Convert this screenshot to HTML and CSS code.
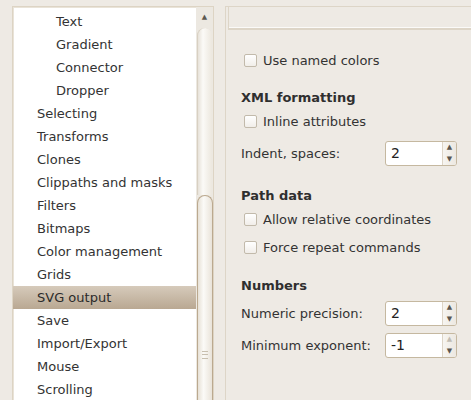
FILE: index.html
```
<!DOCTYPE html>
<html>
<head>
<meta charset="utf-8">
<link rel="stylesheet" href="styles.css">
</head>
<body>
<div class="window">
  <div class="tree">
    <ul class="list">
      <li class="sub">Text</li>
      <li class="sub">Gradient</li>
      <li class="sub">Connector</li>
      <li class="sub">Dropper</li>
      <li>Selecting</li>
      <li>Transforms</li>
      <li>Clones</li>
      <li>Clippaths and masks</li>
      <li>Filters</li>
      <li>Bitmaps</li>
      <li>Color management</li>
      <li>Grids</li>
      <li class="selected">SVG output</li>
      <li>Save</li>
      <li>Import/Export</li>
      <li>Mouse</li>
      <li>Scrolling</li>
    </ul>
    <div class="scrollbar">
      <div class="arrow">&#9650;</div>
      <div class="trough"></div>
      <div class="thumb"><span class="grip"></span></div>
    </div>
  </div>
  <div class="pane">
    <div class="pane-header"></div>
    <div class="pane-body">
      <label class="check-row r1"><span class="box"></span>Use named colors</label>
      <div class="heading h1">XML formatting</div>
      <label class="check-row"><span class="box"></span>Inline attributes</label>
      <div class="spin-row s1"><span class="spin-label">Indent, spaces:</span>
        <div class="spin"><span class="value">2</span><span class="arrows"><span class="up">&#9650;</span><span class="down">&#9660;</span></span></div>
      </div>
      <div class="heading h2">Path data</div>
      <label class="check-row"><span class="box"></span>Allow relative coordinates</label>
      <label class="check-row r2"><span class="box"></span>Force repeat commands</label>
      <div class="heading h3">Numbers</div>
      <div class="spin-row s2"><span class="spin-label">Numeric precision:</span>
        <div class="spin"><span class="value">2</span><span class="arrows"><span class="up">&#9650;</span><span class="down">&#9660;</span></span></div>
      </div>
      <div class="spin-row s3"><span class="spin-label">Minimum exponent:</span>
        <div class="spin"><span class="value">-1</span><span class="arrows"><span class="up disabled">&#9650;</span><span class="down">&#9660;</span></span></div>
      </div>
    </div>
  </div>
</div>
</body>
</html>
```
FILE: styles.css
```
html, body {
  margin: 0;
  padding: 0;
  background: #eeeae4;
  overflow: hidden;
}
body {
  font-family: "DejaVu Sans", "Liberation Sans", sans-serif;
  font-size: 13px;
  color: #333333;
}
.window {
  display: flex;
  height: 400px;
  padding: 6px 0 0 12px;
  box-sizing: border-box;
  gap: 11px;
  overflow: hidden;
}
.tree {
  width: 200px;
  height: 420px;
  flex: none;
  display: flex;
  background: #ffffff;
  border: 1px solid #ddd4c4;
  box-shadow: inset 1px 1px 0 #e9e3d8;
}
.list {
  list-style: none;
  margin: 0;
  padding: 3px 0 0 0;
  width: 183px;
  flex: none;
}
.list li {
  height: 23px;
  line-height: 23px;
  padding-left: 24px;
  white-space: nowrap;
}
.list li.sub {
  padding-left: 43px;
}
.list li.selected {
  background: linear-gradient(#d6cabb, #b9a892);
  color: #2b2b2b;
}
.scrollbar {
  width: 17px;
  flex: none;
  background: #ece8e1;
  display: flex;
  flex-direction: column;
  align-items: center;
  overflow: hidden;
}
.arrow {
  flex: none;
  height: 21px;
  font-size: 7px;
  line-height: 21px;
  color: #5c5850;
}
.trough {
  flex: none;
  width: 15px;
  height: 167px;
  border-radius: 8px 8px 0 0;
  background: linear-gradient(90deg, #e3ddd3, #fbfaf7 40%, #ece7de);
  box-shadow: inset 1px 0 0 #d8d0c2;
}
.thumb {
  flex: none;
  height: 260px;
  border: 1px solid #bba98f;
  border-bottom: none;
  border-radius: 8px 8px 0 0;
  background: linear-gradient(90deg, #e7e1d6, #fbfaf7 40%, #e9e3d9);
  display: flex;
  justify-content: center;
  padding-top: 155px;
  box-sizing: border-box;
  width: 16px;
}
.grip {
  width: 6px;
  height: 6px;
  border-top: 1px solid #c8bfaf;
  border-bottom: 1px solid #c8bfaf;
  position: relative;
}
.grip::after {
  content: "";
  position: absolute;
  left: 0;
  right: 0;
  top: 2px;
  border-top: 1px solid #c8bfaf;
}
.pane {
  flex: 1;
  border-left: 1px solid #ddd5c7;
  border-top: 1px solid #ddd5c7;
  height: 420px;
}
.pane-header {
  height: 21px;
  margin-left: 2px;
  border-left: 1px solid #ddd5c7;
  border-bottom: 2px solid #ddd5c7;
  box-shadow: 0 -1px 0 #fbfaf8 inset;
}
.pane-body {
  padding: 18px 0 0 15px;
  display: flex;
  flex-direction: column;
}
.check-row {
  display: flex;
  align-items: center;
  height: 24px;
  padding-left: 3px;
  gap: 6px;
}
.box {
  width: 11px;
  height: 11px;
  border: 1px solid #c2baab;
  border-radius: 2px;
  background: linear-gradient(#ffffff, #f1eee9);
}
.heading {
  font-weight: bold;
  height: 22px;
  line-height: 22px;
  color: #2f2f2f;
}
.h1 { margin-top: 15px; }
.h2 { margin-top: 19px; }
.h3 { margin-top: 16px; }
.r2 { margin-top: 4px; }
.spin-row {
  display: flex;
  align-items: center;
  height: 26px;
}
.s1 { margin-top: 7px; }
.s2 { margin-top: 3px; }
.s3 { margin-top: 6px; }
.spin-label {
  width: 144px;
  flex: none;
}
.spin {
  width: 70px;
  height: 23px;
  border: 1px solid #c5b8a0;
  border-radius: 3px;
  background: #ffffff;
  display: flex;
}
.value {
  flex: 1;
  padding-left: 5px;
  line-height: 23px;
  font-size: 14px;
  color: #222;
}
.arrows {
  width: 13px;
  border-left: 1px solid #ddd5c7;
  background: linear-gradient(90deg, #f7f5f1, #ece8e1);
  border-radius: 0 2px 2px 0;
  display: flex;
  flex-direction: column;
  align-items: center;
  justify-content: space-around;
  font-size: 7px;
  line-height: 10px;
  color: #5a564f;
}
.up.disabled {
  color: #c1bcb3;
}
```
